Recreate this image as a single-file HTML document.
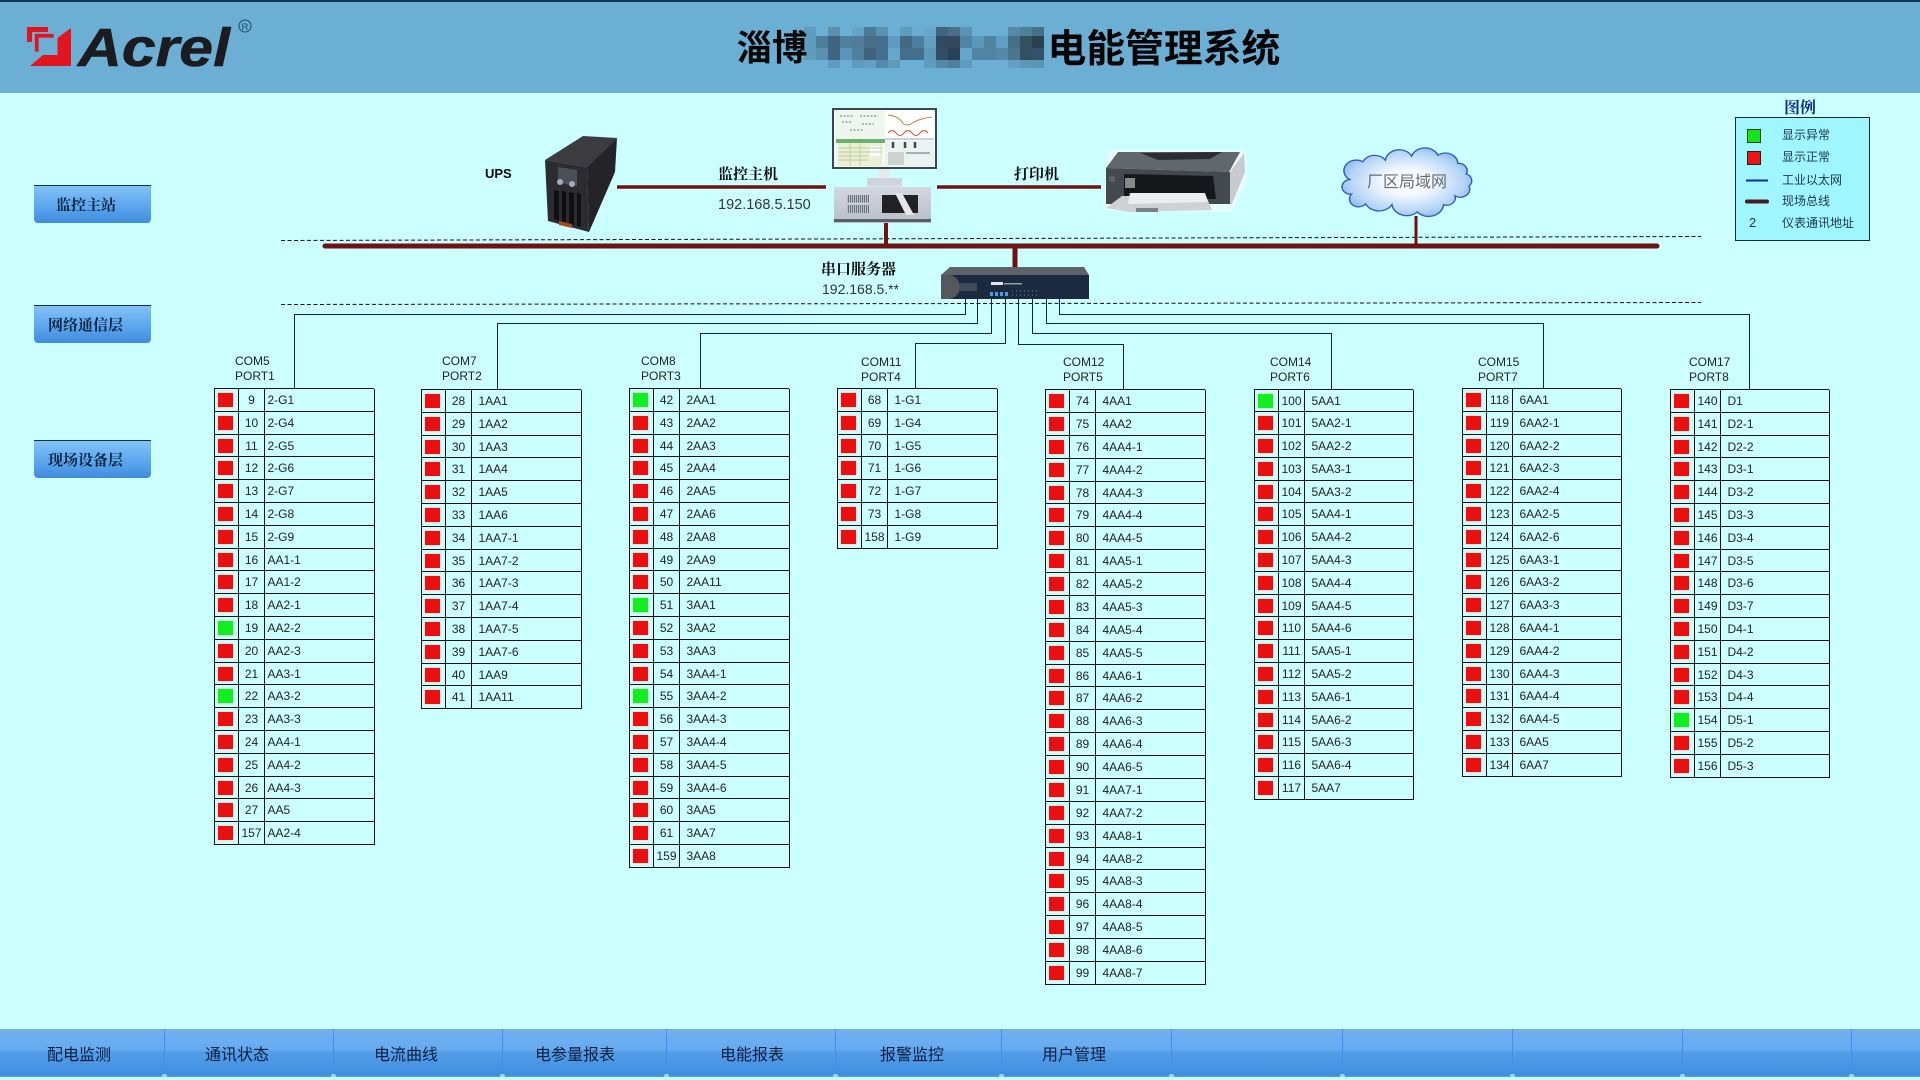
<!DOCTYPE html>
<html lang="zh"><head><meta charset="utf-8"><title>淄博电能管理系统</title>
<style>
*{box-sizing:border-box}
html,body{margin:0;padding:0;width:1920px;height:1080px;overflow:hidden;background:#ccffff}
body{position:relative;font-family:"Liberation Sans","Noto Sans CJK SC",sans-serif;color:#222}
#hd{position:absolute;left:0;top:0;width:1920px;height:93px;background:#6bafd5;border-top:2px solid #123a58}
svg.full{position:absolute;left:0;top:0;width:1920px;height:1080px}
.a{position:absolute;white-space:nowrap;line-height:20px}
.sf{font-family:"Liberation Serif","Noto Serif CJK SC",serif;font-weight:700;font-size:15px;color:#0a0a0a}
.btn{position:absolute;left:34px;width:117px;height:38px;border-top:1px solid #10304c;border-radius:0 0 4px 4px;background:linear-gradient(#82c2f6,#5ca7ee 55%,#3f8bdc)}
.btn span{position:absolute;top:10px;white-space:nowrap;line-height:20px;font-family:"Liberation Serif","Noto Serif CJK SC",serif;font-weight:700;font-size:15px;color:#0b2440}
#leg{position:absolute;left:1735px;top:117px;width:135px;height:124px;background:#9ff6ff;border:1px solid #0d2b3a}
.lt{font-size:12px;color:#1b3450;font-family:"Noto Sans CJK SC",sans-serif;left:1782px}
.com{position:absolute;font-size:12px;line-height:14.7px;color:#222;white-space:nowrap}
.t{position:absolute;width:160px;display:grid;grid-template-columns:24px 26px 110px;grid-auto-rows:22.8px;border-top:1px solid #111;border-left:1px solid #111;font-size:12px;color:#222}
.t.h{grid-auto-rows:22.88px}
.t.n{width:159px;grid-template-columns:24px 26px 109px}
.t>*{display:block;font:inherit;font-style:normal;text-decoration:none;font-weight:400;border-bottom:1px solid #111;line-height:23.5px;white-space:nowrap;position:relative;overflow:visible}
.t i{border-right:1px solid #111}
.t i:before{content:"";position:absolute;left:3px;top:4px;width:15px;height:14px;background:#ea1010;box-shadow:0 0 2px 1px #fbd9d9}
.t i.g:before{background:#12ee20;box-shadow:0 0 2px 1px #c8f5c8}
.t u{text-align:center;border-right:1px solid #111}
.t b{border-right:1px solid #111;padding-left:6.5px}
.t.p3 b{padding-left:2.5px}
#nav{position:absolute;left:0;top:1029px;width:1920px;height:48px;background:linear-gradient(#7eaccb 0,#70b0f2 3px,#66abf0 44%,#559fe9 46%,#3f8ee0 97%,#5fb2c9 100%);font-family:"Noto Sans CJK SC",sans-serif;font-size:16px;color:#0c1c3c}
#nav span{position:absolute;top:14px;line-height:20px;white-space:nowrap}
#nav s{position:absolute;top:0;width:1px;height:48px;background:#3f8ff0;text-decoration:none}
#nav s:after{content:"";position:absolute;left:-2px;bottom:0;width:5px;height:3px;background:#8fdcf2;border-radius:2px 2px 0 0}
</style></head><body>
<div id="hd"></div>
<svg class="full" viewBox="0 0 1920 1080" xmlns="http://www.w3.org/2000/svg">
<defs>
<radialGradient id="cl" cx=".5" cy=".5" r=".55"><stop offset="0" stop-color="#fff"/><stop offset=".35" stop-color="#f2f8ff"/><stop offset=".8" stop-color="#b4d4f6"/><stop offset="1" stop-color="#86b6ee"/></radialGradient>
<linearGradient id="cs" x1="0" x2="0" y1="0" y2="1"><stop offset="0" stop-color="#d4d8e0"/><stop offset="1" stop-color="#b8bec8"/></linearGradient>
<pattern id="gr" width="2" height="4" patternUnits="userSpaceOnUse"><rect width="1" height="4" fill="#6f757d"/><rect x="1" width="1" height="4" fill="#b8bdc5"/></pattern>
</defs>
<!-- logo -->
<g fill="#e2151f">
<path d="M71 28L57.500 38V55H43L30 66H71Z"/>
<path d="M27 27H48V32H32V42H27Z"/>
<path d="M34.500 33.500H54V38H39V52H34.500Z" stroke="#6bafd5" stroke-width=".7"/>
</g>
<text x="78" y="66" font-family="Liberation Sans" font-weight="700" font-style="italic" font-size="54" fill="#1b1b20" stroke="#1b1b20" stroke-width=".6" textLength="152" lengthAdjust="spacingAndGlyphs">Acrel</text>
<circle cx="245" cy="26" r="6" fill="none" stroke="#1d4a66" stroke-width="1"/>
<text x="241.5" y="30" font-family="Liberation Sans" font-size="9.5" fill="#1d4a66">R</text>
<!-- mosaic -->
<g>
<path fill="#5f9dbf" d="M804 27h12v9h-12z"/><path fill="#5a8fae" d="M828 27h12v9h-12z"/><path fill="#67a3c5" d="M852 27h12v9h-12z"/><path fill="#4a7a96" d="M864 27h12v9h-12z"/><path fill="#5a92b4" d="M876 27h12v9h-12z"/><path fill="#5f9bbc" d="M900 27h12v9h-12z"/><path fill="#6aabd0" d="M912 27h12v9h-12z"/><path fill="#68a8ca" d="M924 27h12v9h-12z"/><path fill="#3f6480" d="M936 27h12v9h-12z"/><path fill="#4a6f88" d="M948 27h12v9h-12z"/><path fill="#5b94b4" d="M960 27h12v9h-12z"/><path fill="#5588a8" d="M1008 27h12v9h-12z"/><path fill="#4f8099" d="M1020 27h12v9h-12z"/><path fill="#467089" d="M1032 27h12v9h-12z"/>
<path fill="#5f9dbd" d="M804 36h12v12h-12z"/><path fill="#4d7f9b" d="M816 36h12v12h-12z"/><path fill="#3f6680" d="M828 36h12v12h-12z"/><path fill="#4f7f9b" d="M840 36h12v12h-12z"/><path fill="#4f7d98" d="M852 36h12v12h-12z"/><path fill="#466e88" d="M864 36h12v12h-12z"/><path fill="#44708f" d="M876 36h12v12h-12z"/><path fill="#5f9bbf" d="M888 36h12v12h-12z"/><path fill="#436a80" d="M900 36h12v12h-12z"/><path fill="#4a7fa3" d="M912 36h12v12h-12z"/><path fill="#62a0c0" d="M924 36h12v12h-12z"/><path fill="#2f4a63" d="M936 36h12v12h-12z"/><path fill="#33485a" d="M948 36h12v12h-12z"/><path fill="#4f84a5" d="M960 36h12v12h-12z"/><path fill="#5b97b8" d="M972 36h12v12h-12z"/><path fill="#50839f" d="M984 36h12v12h-12z"/><path fill="#5e9fc5" d="M996 36h12v12h-12z"/><path fill="#466e88" d="M1008 36h12v12h-12z"/><path fill="#33505f" d="M1020 36h12v12h-12z"/><path fill="#28404f" d="M1032 36h12v12h-12z"/>
<path fill="#5f9dbd" d="M804 48h12v12h-12z"/><path fill="#5890b0" d="M816 48h12v12h-12z"/><path fill="#3f6680" d="M828 48h12v12h-12z"/><path fill="#5a94b6" d="M840 48h12v12h-12z"/><path fill="#4f809c" d="M852 48h12v12h-12z"/><path fill="#40627c" d="M864 48h12v12h-12z"/><path fill="#44708f" d="M876 48h12v12h-12z"/><path fill="#66a8cc" d="M888 48h12v12h-12z"/><path fill="#446f8a" d="M900 48h24v12h-24z"/><path fill="#5c98b8" d="M924 48h12v12h-12z"/><path fill="#2f4d66" d="M936 48h12v12h-12z"/><path fill="#2a4056" d="M948 48h12v12h-12z"/><path fill="#64a6cc" d="M960 48h12v12h-12z"/><path fill="#4f84a5" d="M972 48h24v12h-24z"/><path fill="#5589a8" d="M996 48h12v12h-12z"/><path fill="#4a7690" d="M1008 48h12v12h-12z"/><path fill="#33505f" d="M1020 48h12v12h-12z"/><path fill="#335268" d="M1032 48h12v12h-12z"/>
<path fill="#5f9bc0" d="M828 60h12v8h-12z"/><path fill="#5e9cbd" d="M852 60h12v8h-12z"/><path fill="#639fc3" d="M864 60h12v8h-12z"/><path fill="#5289ac" d="M876 60h12v8h-12z"/><path fill="#5f9abb" d="M888 60h12v8h-12z"/><path fill="#5f9dc0" d="M924 60h12v8h-12z"/><path fill="#5488a8" d="M936 60h12v8h-12z"/><path fill="#4f7f9b" d="M948 60h12v8h-12z"/><path fill="#5f9bbc" d="M960 60h12v8h-12z"/><path fill="#639fc4" d="M1008 60h12v8h-12z"/><path fill="#5c97b8" d="M1020 60h12v8h-12z"/><path fill="#5a94b4" d="M1032 60h12v8h-12z"/>
</g>
<!-- dashed layers -->
<path d="M281 240.5L1701 236.5M281 304.5L1701 302.5" fill="none" stroke="#111" stroke-width="1" stroke-dasharray="4 2.5"/>
<!-- bus lines -->
<g stroke="#6e1212" fill="none">
<path d="M325 246H1657" stroke-width="5" stroke-linecap="round"/>
<path d="M617 187H826M937 187H1101" stroke-width="3.5"/>
<path d="M886 222V246" stroke-width="4"/>
<path d="M1015 246V267" stroke-width="5"/>
<path d="M1416 216V245" stroke-width="3"/>
</g>
<!-- comm lines -->
<g stroke="#0a2258" stroke-width="1" fill="none">
<path d="M965.5 299V314.5H294.5V388"/>
<path d="M977.5 299V323.5H497.5V389"/>
<path d="M991.5 299V333.5H700.5V388"/>
<path d="M1005.5 299V343.5H915.5V388"/>
<path d="M1018.5 299V344.5H1123.5V389"/>
<path d="M1032.5 299V333.5H1331.5V389"/>
<path d="M1046.5 299V323.5H1543.5V388"/>
<path d="M1059.5 299V314.5H1749.5V389"/>
</g>
<!-- UPS -->
<g>
<path fill="#3b3b40" d="M545 160L583 136L617 138L587 167Z"/>
<path fill="#2b2b30" d="M545 160L587 167L589 232L548 221Z"/>
<path fill="#232328" d="M587 167L617 138L615 172L589 232Z"/>
<path fill="#4a5058" d="M558 167L577 170L577 186L558 183Z"/>
<circle cx="560" cy="182" r="3" fill="#aab"/><circle cx="572" cy="184" r="3" fill="#aab"/>
<path fill="#101014" d="M554 190L559 191L559 221L554 219ZM562 191L566 192L566 223L562 222ZM569 192L574 193L574 225L569 224ZM577 193L581 194L581 227L577 226Z"/>
<path fill="#a44a20" d="M559 221L572 224L572 228L559 225Z"/>
</g>
<!-- monitor + PC -->
<g>
<path fill="#e6e9ee" d="M878 169h12v9h-12z"/><path fill="#cfd4de" d="M867 178h35v8.500h-35z"/>
<rect x="832" y="108" width="105" height="61" fill="#3d4650"/>
<rect x="834" y="110" width="101" height="57" fill="#f4f8f4"/>
<rect x="836" y="111" width="48" height="29" fill="#eef6ee"/>
<path d="M840 116h14M860 116h18M842 122h10M862 124h12M850 130h14" stroke="#8aa" stroke-width="1.500" stroke-dasharray="2 1.500"/>
<rect x="836" y="139" width="49" height="4" fill="#6fb070"/>
<rect x="838" y="143" width="44" height="23" fill="#e9f0d4"/>
<rect x="870" y="146" width="10" height="10" fill="#fff"/>
<path d="M838 148h44M838 152h44M838 156h30M838 160h30M850 143v23M860 143v23" stroke="#b4c090" stroke-width=".7"/>
<rect x="885" y="111" width="49" height="28" fill="#fff"/>
<path d="M888 115q10 1 14 7t12 0q8-4 18-5" fill="none" stroke="#c08040" stroke-width="1"/>
<path d="M888 133q4-5 8 0t8 0t8 0t8 0t8 0" fill="none" stroke="#d07040" stroke-width="1.200"/>
<path d="M885 139h49" stroke="#9ab" stroke-width="1"/>
<rect x="885" y="141" width="49" height="25" fill="#e9f3f0"/>
<path d="M893 142v6M905 142v6M915 142v6" stroke="#445" stroke-width="2.500"/>
<rect x="888" y="152" width="16" height="13" fill="#cdd3cc"/>
<path d="M906 153h24" stroke="#667" stroke-width="1"/>
<rect x="834" y="187" width="97" height="36" fill="url(#cs)"/>
<rect x="847" y="195" width="22" height="7.500" fill="url(#gr)"/><rect x="847" y="205" width="22" height="8" fill="url(#gr)"/>
<rect x="882" y="195" width="36" height="18" fill="#222226"/>
<path d="M895 193L902 193L914 215L906 215Z" fill="#e4e6ea"/>
<rect x="834" y="219" width="97" height="3" fill="#5a606a"/>
</g>
<!-- printer -->
<g>
<path fill="#f2fbfb" d="M1103 210L1108 150H1246L1247 180L1232 212Z" opacity=".7"/>
<path fill="#c7cbce" d="M1230 172L1244 153L1245 172L1232 204L1226 204Z"/>
<path fill="#61686d" d="M1106 168L1118 152L1240 152L1229 172Z"/>
<path fill="#2a2e32" d="M1140 153L1222 152L1210 159L1158 160Z"/>
<path fill="#43494f" d="M1106 168L1230 172L1230 204L1106 204Z"/>
<path fill="#15181b" d="M1124 174L1213 176L1216 199L1124 199Z"/>
<path fill="#cfd1d4" d="M1122 196L1206 196L1212 210L1130 212L1106 208Z"/>
<path fill="#ecedef" d="M1130 193L1205 193L1208 202L1128 204Z"/>
<path fill="#7c8084" d="M1136 208h22v4h-22z"/>
<rect x="1109" y="176" width="6" height="6" fill="#5a6066"/>
<rect x="1125" y="178" width="10" height="10" fill="#888"/>
</g>
<!-- cloud -->
<g transform="translate(1406.5 182) scale(.94 .81) translate(-1404.5 -180)">
<path d="M1344 177A13 13 0 0 1 1358 155A14 14 0 0 1 1382 153A15 15 0 0 1 1410 148A15 15 0 0 1 1438 147A13 13 0 0 1 1459 157A9 9 0 0 1 1468 170A9 9 0 0 1 1471 185A10 10 0 0 1 1456 197A9 9 0 0 1 1444 208A16 16 0 0 1 1416 217A16 16 0 0 1 1389 208A16 16 0 0 1 1361 207A9 9 0 0 1 1346 195A9 9 0 0 1 1344 177Z" fill="url(#cl)" stroke="#2f5fb8" stroke-width="1.600"/>
</g>
<!-- serial server -->
<g>
<path fill="#5e636b" d="M941 275L950 267L1084 267L1089 275Z"/>
<rect x="941" y="275" width="148" height="24" fill="#1c2a40"/>
<path fill="#55585c" d="M941 275h7a12 12 0 0 1 0 24h-7z"/>
<rect x="960" y="283" width="17" height="8" fill="#3c4c58"/>
<rect x="991" y="282" width="12" height="3" fill="#dfe6f0"/><rect x="1004" y="283" width="18" height="1.500" fill="#90a0b0"/>
<path d="M990 292h3v4h-3zM995 292h3v4h-3zM1000 292h3v4h-3zM1005 292h3v4h-3z" fill="#4b9be6"/>
<path d="M1012 291h28M1012 295h28" stroke="#708090" stroke-width="1" stroke-dasharray="1 3"/>
</g>
</svg>
<div class="a" style="left:736.5px;top:26px;font-family:'Noto Sans CJK SC',sans-serif;font-size:35.500px;line-height:40px;font-weight:700;color:#050505">淄博</div>
<div class="a" style="left:1047.5px;top:26px;font-family:'Noto Sans CJK SC',sans-serif;font-size:38.800px;line-height:40px;font-weight:700;color:#050505">电能管理系统</div>
<div class="a" style="left:1367px;top:170px;font-family:'Noto Sans CJK SC',sans-serif;font-size:16px;color:#666c74">厂区局域网</div>
<div class="a" style="left:485px;top:164px;font-size:13px;font-weight:700;color:#0a0a0a">UPS</div>
<div class="a sf" style="left:718px;top:165px">监控主机</div>
<div class="a" style="left:718px;top:195px;font-size:14.500px;color:#333">192.168.5.150</div>
<div class="a sf" style="left:1014px;top:165px">打印机</div>
<div class="a sf" style="left:821px;top:260px">串口服务器</div>
<div class="a" style="left:822px;top:279px;font-size:14px;color:#333">192.168.5.**</div>
<div class="btn" style="top:185px"><span style="left:22px;top:9.500px">监控主站</span></div>
<div class="btn" style="top:305px"><span style="left:14px">网络通信层</span></div>
<div class="btn" style="top:440px"><span style="left:14px">现场设备层</span></div>
<div class="a" style="left:1784px;top:97px;font-family:'Noto Serif CJK SC',serif;font-weight:700;font-size:16px;color:#0d2a8a">图例</div>
<div id="leg"></div>
<svg class="full" viewBox="0 0 1920 1080" xmlns="http://www.w3.org/2000/svg" style="pointer-events:none">
<rect x="1747.500" y="129.500" width="13" height="13" fill="#12e61a" stroke="#0d3a20"/>
<rect x="1747.500" y="151.500" width="13" height="13" fill="#ee1414" stroke="#222"/>
<path d="M1746 180.500H1768" stroke="#0a2fa0" stroke-width="2"/>
<path d="M1747 201.500H1767" stroke="#4a1c1e" stroke-width="4" stroke-linecap="round"/>
</svg>
<div class="a lt" style="top:125px">显示异常</div>
<div class="a lt" style="top:147px">显示正常</div>
<div class="a lt" style="top:170px">工业以太网</div>
<div class="a lt" style="top:191px">现场总线</div>
<div class="a lt" style="top:213px">仪表通讯地址</div>
<div class="a" style="left:1749px;top:213px;font-size:13px;color:#1b3450">2</div>

<div class="com" style="left:235px;top:354px">COM5<br>PORT1</div>
<div class="com" style="left:442px;top:354px">COM7<br>PORT2</div>
<div class="com" style="left:641px;top:354px">COM8<br>PORT3</div>
<div class="com" style="left:861px;top:355px">COM11<br>PORT4</div>
<div class="com" style="left:1063px;top:355px">COM12<br>PORT5</div>
<div class="com" style="left:1270px;top:355px">COM14<br>PORT6</div>
<div class="com" style="left:1478px;top:355px">COM15<br>PORT7</div>
<div class="com" style="left:1689px;top:355px">COM17<br>PORT8</div>

<div class="t p3" style="left:214px;top:388px">
<i></i><u>9</u><b>2-G1</b><i></i><u>10</u><b>2-G4</b><i></i><u>11</u><b>2-G5</b><i></i><u>12</u><b>2-G6</b><i></i><u>13</u><b>2-G7</b><i></i><u>14</u><b>2-G8</b><i></i><u>15</u><b>2-G9</b><i></i><u>16</u><b>AA1-1</b><i></i><u>17</u><b>AA1-2</b><i></i><u>18</u><b>AA2-1</b><i class="g"></i><u>19</u><b>AA2-2</b><i></i><u>20</u><b>AA2-3</b><i></i><u>21</u><b>AA3-1</b><i class="g"></i><u>22</u><b>AA3-2</b><i></i><u>23</u><b>AA3-3</b><i></i><u>24</u><b>AA4-1</b><i></i><u>25</u><b>AA4-2</b><i></i><u>26</u><b>AA4-3</b><i></i><u>27</u><b>AA5</b><i></i><u>157</u><b>AA2-4</b>
</div>
<div class="t" style="left:421px;top:389px">
<i></i><u>28</u><b>1AA1</b><i></i><u>29</u><b>1AA2</b><i></i><u>30</u><b>1AA3</b><i></i><u>31</u><b>1AA4</b><i></i><u>32</u><b>1AA5</b><i></i><u>33</u><b>1AA6</b><i></i><u>34</u><b>1AA7-1</b><i></i><u>35</u><b>1AA7-2</b><i></i><u>36</u><b>1AA7-3</b><i></i><u>37</u><b>1AA7-4</b><i></i><u>38</u><b>1AA7-5</b><i></i><u>39</u><b>1AA7-6</b><i></i><u>40</u><b>1AA9</b><i></i><u>41</u><b>1AA11</b>
</div>
<div class="t" style="left:629px;top:388px">
<i class="g"></i><u>42</u><b>2AA1</b><i></i><u>43</u><b>2AA2</b><i></i><u>44</u><b>2AA3</b><i></i><u>45</u><b>2AA4</b><i></i><u>46</u><b>2AA5</b><i></i><u>47</u><b>2AA6</b><i></i><u>48</u><b>2AA8</b><i></i><u>49</u><b>2AA9</b><i></i><u>50</u><b>2AA11</b><i class="g"></i><u>51</u><b>3AA1</b><i></i><u>52</u><b>3AA2</b><i></i><u>53</u><b>3AA3</b><i></i><u>54</u><b>3AA4-1</b><i class="g"></i><u>55</u><b>3AA4-2</b><i></i><u>56</u><b>3AA4-3</b><i></i><u>57</u><b>3AA4-4</b><i></i><u>58</u><b>3AA4-5</b><i></i><u>59</u><b>3AA4-6</b><i></i><u>60</u><b>3AA5</b><i></i><u>61</u><b>3AA7</b><i></i><u>159</u><b>3AA8</b>
</div>
<div class="t" style="left:837px;top:388px">
<i></i><u>68</u><b>1-G1</b><i></i><u>69</u><b>1-G4</b><i></i><u>70</u><b>1-G5</b><i></i><u>71</u><b>1-G6</b><i></i><u>72</u><b>1-G7</b><i></i><u>73</u><b>1-G8</b><i></i><u>158</u><b>1-G9</b>
</div>
<div class="t h" style="left:1045px;top:389px">
<i></i><u>74</u><b>4AA1</b><i></i><u>75</u><b>4AA2</b><i></i><u>76</u><b>4AA4-1</b><i></i><u>77</u><b>4AA4-2</b><i></i><u>78</u><b>4AA4-3</b><i></i><u>79</u><b>4AA4-4</b><i></i><u>80</u><b>4AA4-5</b><i></i><u>81</u><b>4AA5-1</b><i></i><u>82</u><b>4AA5-2</b><i></i><u>83</u><b>4AA5-3</b><i></i><u>84</u><b>4AA5-4</b><i></i><u>85</u><b>4AA5-5</b><i></i><u>86</u><b>4AA6-1</b><i></i><u>87</u><b>4AA6-2</b><i></i><u>88</u><b>4AA6-3</b><i></i><u>89</u><b>4AA6-4</b><i></i><u>90</u><b>4AA6-5</b><i></i><u>91</u><b>4AA7-1</b><i></i><u>92</u><b>4AA7-2</b><i></i><u>93</u><b>4AA8-1</b><i></i><u>94</u><b>4AA8-2</b><i></i><u>95</u><b>4AA8-3</b><i></i><u>96</u><b>4AA8-4</b><i></i><u>97</u><b>4AA8-5</b><i></i><u>98</u><b>4AA8-6</b><i></i><u>99</u><b>4AA8-7</b>
</div>
<div class="t n" style="left:1254px;top:388.500px">
<i class="g"></i><u>100</u><b>5AA1</b><i></i><u>101</u><b>5AA2-1</b><i></i><u>102</u><b>5AA2-2</b><i></i><u>103</u><b>5AA3-1</b><i></i><u>104</u><b>5AA3-2</b><i></i><u>105</u><b>5AA4-1</b><i></i><u>106</u><b>5AA4-2</b><i></i><u>107</u><b>5AA4-3</b><i></i><u>108</u><b>5AA4-4</b><i></i><u>109</u><b>5AA4-5</b><i></i><u>110</u><b>5AA4-6</b><i></i><u>111</u><b>5AA5-1</b><i></i><u>112</u><b>5AA5-2</b><i></i><u>113</u><b>5AA6-1</b><i></i><u>114</u><b>5AA6-2</b><i></i><u>115</u><b>5AA6-3</b><i></i><u>116</u><b>5AA6-4</b><i></i><u>117</u><b>5AA7</b>
</div>
<div class="t n" style="left:1462px;top:388px">
<i></i><u>118</u><b>6AA1</b><i></i><u>119</u><b>6AA2-1</b><i></i><u>120</u><b>6AA2-2</b><i></i><u>121</u><b>6AA2-3</b><i></i><u>122</u><b>6AA2-4</b><i></i><u>123</u><b>6AA2-5</b><i></i><u>124</u><b>6AA2-6</b><i></i><u>125</u><b>6AA3-1</b><i></i><u>126</u><b>6AA3-2</b><i></i><u>127</u><b>6AA3-3</b><i></i><u>128</u><b>6AA4-1</b><i></i><u>129</u><b>6AA4-2</b><i></i><u>130</u><b>6AA4-3</b><i></i><u>131</u><b>6AA4-4</b><i></i><u>132</u><b>6AA4-5</b><i></i><u>133</u><b>6AA5</b><i></i><u>134</u><b>6AA7</b>
</div>
<div class="t n" style="left:1670px;top:389px">
<i></i><u>140</u><b>D1</b><i></i><u>141</u><b>D2-1</b><i></i><u>142</u><b>D2-2</b><i></i><u>143</u><b>D3-1</b><i></i><u>144</u><b>D3-2</b><i></i><u>145</u><b>D3-3</b><i></i><u>146</u><b>D3-4</b><i></i><u>147</u><b>D3-5</b><i></i><u>148</u><b>D3-6</b><i></i><u>149</u><b>D3-7</b><i></i><u>150</u><b>D4-1</b><i></i><u>151</u><b>D4-2</b><i></i><u>152</u><b>D4-3</b><i></i><u>153</u><b>D4-4</b><i class="g"></i><u>154</u><b>D5-1</b><i></i><u>155</u><b>D5-2</b><i></i><u>156</u><b>D5-3</b>
</div>

<div id="nav">
<s style="left:164px"></s><s style="left:333px"></s><s style="left:502px"></s><s style="left:666px"></s><s style="left:835px"></s><s style="left:1001px"></s><s style="left:1171px"></s><s style="left:1342px"></s><s style="left:1512px"></s><s style="left:1682px"></s><s style="left:1851px"></s>
<span style="left:47px">配电监测</span><span style="left:205px">通讯状态</span><span style="left:374px">电流曲线</span><span style="left:535px">电参量报表</span><span style="left:720px">电能报表</span><span style="left:880px">报警监控</span><span style="left:1042px">用户管理</span>
</div>
</body></html>
